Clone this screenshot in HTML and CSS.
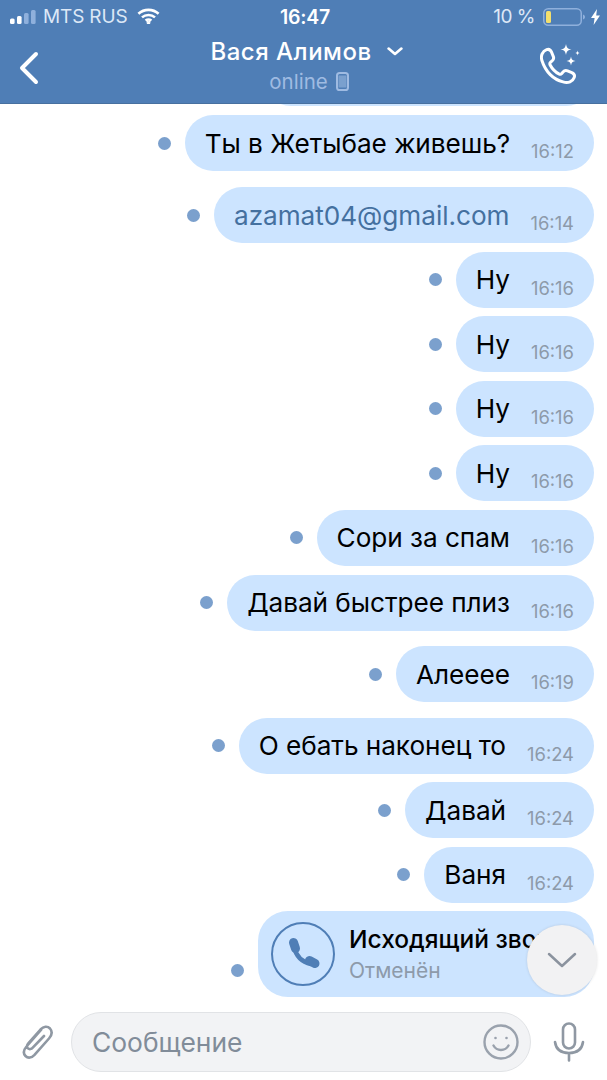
FILE: index.html
```html
<!DOCTYPE html>
<html lang="ru">
<head>
<meta charset="utf-8">
<title>Вася Алимов</title>
<link rel="stylesheet" href="styles.css">
</head>
<body>
<div class="app">
  <header class="header">
    <div class="status">
      <div class="status-left">
        <svg class="signal" width="27" height="14" viewBox="0 0 27 14"><rect x="0" y="8.5" width="4.600" height="5.500" rx="1.500" fill="#fff"/><rect x="7" y="6" width="4.600" height="8" rx="1.500" fill="#fff"/><rect x="14" y="3" width="4.600" height="11" rx="1.500" fill="#8fb0dc"/><rect x="21" y="0" width="4.600" height="14" rx="1.500" fill="#8fb0dc"/></svg>
        <span class="carrier">MTS RUS</span>
        <svg class="wifi" width="23" height="16" viewBox="0 0 23 16" fill="none" stroke="#fff" stroke-width="2.600"><path d="M1.400 5.800C7 .6 16 .6 21.600 5.800"/><path d="M5 9.400c3.600-3.200 9.400-3.200 13 0"/><path d="M8.600 12.600c1.700-1.300 4.100-1.300 5.800 0"/><circle cx="11.500" cy="14.400" r=".6" fill="#fff"/></svg>
      </div>
      <div class="clock">16:47</div>
      <div class="status-right">
        <span class="percent">10 %</span>
        <svg width="42" height="18" viewBox="0 0 42 18"><rect x=".75" y=".75" width="37.500" height="16.500" rx="4.500" fill="none" stroke="#8fb0dc" stroke-width="1.500"/><rect x="3" y="3" width="5" height="12" rx="1.500" fill="#f3df6d"/><path d="M40 6.500c1.300.5 2 1.400 2 2.500s-.7 2-2 2.500z" fill="#8fb0dc"/></svg>
        <svg class="bolt" width="9" height="16" viewBox="0 0 9 16"><path d="M6 0 0 9h3.600L2.600 16 9 6.600H5.200z" fill="#fff"/></svg>
      </div>
    </div>
    <div class="nav">
      <svg class="back" width="22" height="34" viewBox="0 0 22 34" fill="none" stroke="#fff" stroke-width="4" stroke-linecap="round" stroke-linejoin="round"><path d="M18 3 4 17l14 14"/></svg>
      <div class="peer">
        <div class="peer-name"><span>Вася Алимов</span><svg width="16" height="9" viewBox="0 0 16 9" fill="none" stroke="#fff" stroke-width="2.600" stroke-linecap="round" stroke-linejoin="round"><path d="M1.600 1.600 8 7l6.400-5.400"/></svg></div>
        <div class="peer-status"><span>online</span><svg width="13" height="19" viewBox="0 0 13 19"><rect x="1" y="1" width="11" height="17" rx="2.600" fill="none" stroke="#9fbbe2" stroke-width="2"/><rect x="2.500" y="3.500" width="8" height="12" fill="#9fbbe2" opacity=".55"/></svg></div>
      </div>
      <svg class="callmagic" width="40" height="42" viewBox="0 0 40 42" fill="none"><g transform="translate(-2.600 -1) scale(1.150)"><path d="M4 15.500C2.500 11 4.500 7 8 5.800c2-.7 3.400.2 4.200 2l1.600 3.800c.7 1.600.2 2.900-1 3.900l-1.300 1.100c-.8.7-.9 1.500-.4 2.500 1.700 3.300 4.300 6 7.600 7.800 1 .5 1.800.4 2.500-.4l1.100-1.300c1-1.200 2.300-1.600 3.900-1l3.700 1.500c1.900.8 2.800 2.300 2.100 4.300-1.300 3.500-5.200 5.200-9.700 3.800C14 32 7 25 4 15.500z" stroke="#fff" stroke-width="2.600" stroke-linejoin="round"/></g><path d="M26 0c.7 3.800 1.700 4.800 5.500 5.500-3.800.7-4.800 1.700-5.500 5.500-.7-3.800-1.700-4.800-5.500-5.500 3.800-.7 4.800-1.700 5.500-5.500zM31 12.500c.5 3 1.500 4 4.500 4.500-3 .5-4 1.500-4.500 4.500-.5-3-1.500-4-4.500-4.500 3-.5 4-1.500 4.500-4.500zM37.500 6.500c.2 1.600.8 2.200 2.300 2.500-1.500.3-2.100.9-2.300 2.500-.2-1.600-.8-2.200-2.300-2.500 1.500-.3 2.100-.9 2.300-2.500z" fill="#fff"/></svg>
    </div>
  </header>

  <main class="messages">
    <div class="row row-clipped"><div class="bubble bubble-clipped"></div></div>
    <div class="row row-first"><i class="dot"></i><div class="bubble"><span class="text">Ты в Жетыбае живешь?</span><time class="time">16:12</time></div></div>
    <div class="row group"><i class="dot"></i><div class="bubble"><span class="text link">azamat04@gmail.com</span><time class="time">16:14</time></div></div>
    <div class="row"><i class="dot"></i><div class="bubble"><span class="text">Ну</span><time class="time">16:16</time></div></div>
    <div class="row"><i class="dot"></i><div class="bubble"><span class="text">Ну</span><time class="time">16:16</time></div></div>
    <div class="row"><i class="dot"></i><div class="bubble"><span class="text">Ну</span><time class="time">16:16</time></div></div>
    <div class="row"><i class="dot"></i><div class="bubble"><span class="text">Ну</span><time class="time">16:16</time></div></div>
    <div class="row"><i class="dot"></i><div class="bubble"><span class="text">Сори за спам</span><time class="time">16:16</time></div></div>
    <div class="row"><i class="dot"></i><div class="bubble"><span class="text">Давай быстрее плиз</span><time class="time">16:16</time></div></div>
    <div class="row group"><i class="dot"></i><div class="bubble"><span class="text">Алееее</span><time class="time">16:19</time></div></div>
    <div class="row group"><i class="dot"></i><div class="bubble"><span class="text">О ебать наконец то</span><time class="time">16:24</time></div></div>
    <div class="row"><i class="dot"></i><div class="bubble"><span class="text">Давай</span><time class="time">16:24</time></div></div>
    <div class="row"><i class="dot"></i><div class="bubble"><span class="text">Ваня</span><time class="time">16:24</time></div></div>
    <div class="row"><i class="dot dot-call"></i>
      <div class="bubble bubble-call">
        <svg class="call-icon" width="64" height="64" viewBox="0 0 64 64" fill="none" stroke="#4f7eb6" stroke-linecap="round"><circle cx="32" cy="32" r="31" stroke-width="2"/><path d="M22.500 20.500l2 6" stroke-width="9"/><path d="M23 25C25 34 31 40 40 42" stroke-width="4.500"/><path d="M38.500 38.500l5.500 3" stroke-width="9"/></svg>
        <div class="call-body">
          <div class="call-title">Исходящий звонок</div>
          <div class="call-sub">Отменён</div>
        </div>
        <time class="time call-time">16:24</time>
      </div>
    </div>
    <button class="scroll-down" type="button"><svg width="30" height="17" viewBox="0 0 30 17" fill="none" stroke="#8b939e" stroke-width="2.500" stroke-linecap="round" stroke-linejoin="round"><path d="M2 2l13 12L28 2"/></svg></button>
  </main>

  <footer class="composer">
    <svg class="clip" width="34" height="38" viewBox="0 0 34 38" fill="none" stroke="#8f98a3" stroke-width="2.600" stroke-linecap="round" stroke-linejoin="round"><path d="M21 7 6.500 23.500c-3 3.500-3.400 7-1 9.500 2.600 2.600 6 2 9-1.200L29 15.500c3-3.500 3.300-7.300 1-10-2.600-2.700-6.300-2.300-9.500 1L8.500 20c-1.800 2-1.800 4.100-.5 5.400 1.400 1.300 3.300.9 5-1L24 13"/></svg>
    <div class="field">
      <span class="placeholder">Сообщение</span>
      <svg width="36" height="36" viewBox="0 0 36 36" fill="none" stroke="#9aa2ad" stroke-width="2.400" stroke-linecap="round"><circle cx="18" cy="18" r="16.500"/><path d="M10.500 21.500c1.600 3 4.300 4.500 7.500 4.500s5.900-1.500 7.500-4.500"/><circle cx="12.500" cy="14" r="1.300" fill="#9aa2ad" stroke="none"/><circle cx="23.500" cy="14" r="1.300" fill="#9aa2ad" stroke="none"/></svg>
    </div>
    <svg class="mic" width="32" height="40" viewBox="0 0 32 40" fill="none" stroke="#8f98a3" stroke-width="2.600" stroke-linecap="round" stroke-linejoin="round"><rect x="10" y="1.500" width="12" height="25" rx="6"/><path d="M2 20c1 7.500 6.500 11 14 11s13-3.500 14-11M16 31v7.500"/></svg>
  </footer>
</div>
</body>
</html>
```
FILE: styles.css
```css
* { box-sizing: border-box; }
html, body { margin: 0; padding: 0; background: #fff; }
body { font-family: Inter, "Liberation Sans", sans-serif; }

.app { width: 607px; height: 1080px; display: flex; flex-direction: column; overflow: hidden; position: relative; }

.header { height: 104px; flex: none; background: #4f7eb6; border-bottom: 1px solid #47709f; color: #fff; position: relative; z-index: 2; }

.status { height: 33px; display: grid; grid-template-columns: 1fr auto 1fr; align-items: center; padding: 0 7px 0 10px; }
.status-left { display: flex; align-items: center; gap: 6px; color: #dde8f6; }
.carrier { font-size: 19px; letter-spacing: -.15px; font-weight: 400; }
.wifi { margin-left: 4px; margin-top: -2px; }
.clock { font-size: 19.5px; font-weight: 600; letter-spacing: -.2px; color: #fff; }
.status-right { display: flex; justify-content: flex-end; align-items: center; gap: 6px; }
.percent { font-size: 19px; color: #dde8f6; letter-spacing: -.5px; margin-right: 2px; }

.nav { height: 70px; display: grid; grid-template-columns: 1fr auto 1fr; align-items: center; padding: 0 18px; }
.back { margin-top: -1px; }
.peer { display: flex; flex-direction: column; align-items: center; margin: -5px 0 0 6px; }
.peer-name { display: flex; align-items: center; gap: 15px; font-size: 24px; font-weight: 500; line-height: 32px; letter-spacing: .5px; }
.peer-status { display: flex; align-items: center; gap: 8px; color: #9fbbe2; font-size: 20.5px; line-height: 28px; margin-left: 5px; }
.callmagic { justify-self: end; margin-right: 9px; margin-top: -6px; }

.messages { flex: 1; min-height: 0; display: flex; flex-direction: column; align-items: flex-end; padding-right: 13px; overflow: hidden; position: relative; }
.row { display: flex; align-items: center; gap: 14px; margin-top: 8.6px; }
.row.group { margin-top: 15.5px; }
.row-clipped { margin-top: -54px; }
.row-first { margin-top: 9px; }
.row-first + .group { margin-top: 16px; }
.dot { width: 13px; height: 13px; border-radius: 50%; background: #7ba0cd; flex: none; }
.bubble { height: 56px; border-radius: 28px; background: #cce4ff; display: flex; align-items: center; padding: 0 20px; gap: 21px; }
.bubble-clipped { width: 331px; }
.text { font-size: 26.2px; color: #000; letter-spacing: -.05px; white-space: nowrap; }
.text.link { color: #44709f; }
.time { font-size: 18.4px; color: #8d9aaa; margin-top: 16px; }

.bubble-call { height: 86px; width: 336px; border-radius: 30px; padding: 0 0 0 13px; gap: 14px; position: relative; }
.dot-call { margin-top: 32px; }
.call-body { display: flex; flex-direction: column; gap: 3px; min-width: 0; }
.call-title { font-size: 24.5px; font-weight: 500; color: #000; white-space: nowrap; line-height: 29px; }
.call-sub { font-size: 21px; color: #8d9aaa; line-height: 27px; }
.call-time { position: absolute; left: 272px; bottom: 12px; margin: 0; }

.scroll-down { position: absolute; left: 527px; top: 821px; width: 70px; height: 70px; border-radius: 50%; border: 0; padding: 0; background: #f2f2f3; box-shadow: 0 0 3px rgba(0,0,0,.12); display: flex; align-items: center; justify-content: center; }

.composer { height: 77px; flex: none; display: flex; align-items: center; padding: 0 21px 0 20px; gap: 17px; background: #fff; }
.clip { flex: none; }
.field { width: 460px; height: 60px; flex: none; border-radius: 30px; background: #f2f3f5; border: 1px solid #e1e3e6; display: flex; align-items: center; justify-content: space-between; padding: 0 11px 0 20px; }
.placeholder { font-size: 26.4px; color: #818c99; }
.mic { flex: none; margin-left: 5px; }
```
